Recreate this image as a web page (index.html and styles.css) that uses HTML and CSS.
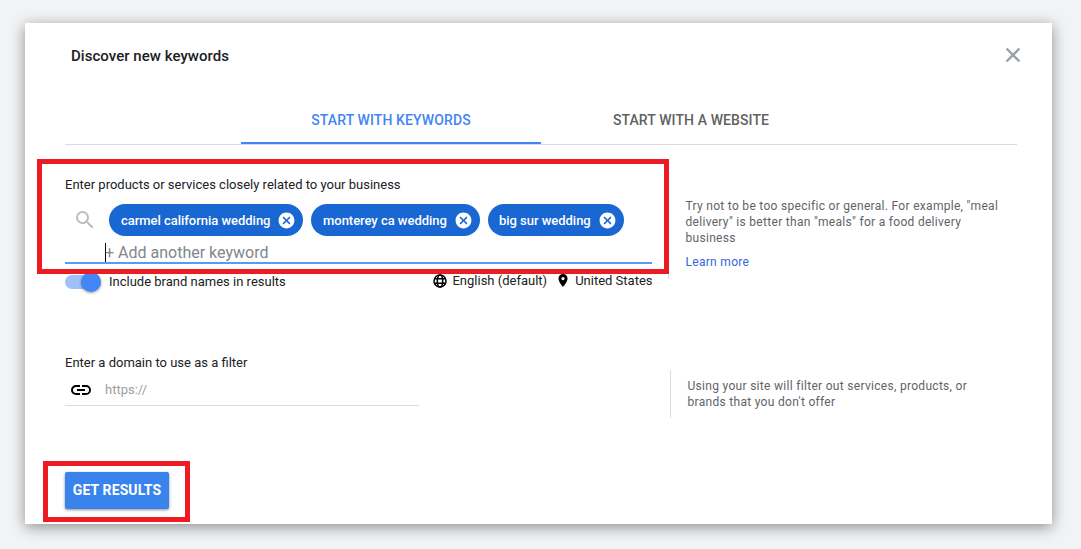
FILE: index.html
```
<!DOCTYPE html>
<html lang="en">
  <head>
    <meta charset="UTF-8" />
    <meta name="viewport" content="width=device-width, initial-scale=1.0" />
    <title>Discover new keywords</title>
    <link rel="stylesheet" href="styles.css">
  </head>
  <body>
    <div class="dialog">
      <div class="header">
        <h1>Discover new keywords</h1>
        <button class="close" aria-label="Close">
          <svg width="16" height="16" viewBox="0 0 16 16">
            <path d="M1.5 1.5l13 13M14.5 1.5l-13 13" stroke="#9aa0a6" stroke-width="2.4" fill="none" />
          </svg>
        </button>
      </div>

      <div class="tabs">
        <div class="tab active">START WITH KEYWORDS</div>
        <div class="tab tab-website">START WITH A WEBSITE</div>
      </div>

      <div class="row keywords-row">
        <div class="keywords">
          <div class="label">Enter products or services closely related to your business</div>
          <div class="chip-input">
            <div class="chips">
              <svg class="search" width="24" height="24" viewBox="0 0 24 24" fill="#bdbdbd">
                <path d="M15.5 14h-.79l-.28-.27A6.47 6.47 0 0 0 16 9.5 6.5 6.5 0 1 0 9.5 16c1.61 0 3.09-.59 4.23-1.57l.27.28v.79l5 4.99L20.49 19l-4.99-5zm-6 0C7.01 14 5 11.99 5 9.5S7.01 5 9.5 5 14 7.01 14 9.5 11.99 14 9.5 14z" />
              </svg>
              <div class="chip chip-carmel">
                <span>carmel california wedding</span>
                <svg width="19" height="19" viewBox="0 0 24 24" fill="#fff">
                  <path d="M12 2C6.47 2 2 6.47 2 12s4.47 10 10 10 10-4.47 10-10S17.53 2 12 2zm5 13.59L15.59 17 12 13.41 8.41 17 7 15.59 10.59 12 7 8.41 8.41 7 12 10.59 15.59 7 17 8.41 13.41 12 17 15.59z" />
                </svg>
              </div>
              <div class="chip chip-monterey">
                <span>monterey ca wedding</span>
                <svg width="19" height="19" viewBox="0 0 24 24" fill="#fff">
                  <path d="M12 2C6.47 2 2 6.47 2 12s4.47 10 10 10 10-4.47 10-10S17.53 2 12 2zm5 13.59L15.59 17 12 13.41 8.41 17 7 15.59 10.59 12 7 8.41 8.41 7 12 10.59 15.59 7 17 8.41 13.41 12 17 15.59z" />
                </svg>
              </div>
              <div class="chip chip-sur">
                <span>big sur wedding</span>
                <svg width="19" height="19" viewBox="0 0 24 24" fill="#fff">
                  <path d="M12 2C6.47 2 2 6.47 2 12s4.47 10 10 10 10-4.47 10-10S17.53 2 12 2zm5 13.59L15.59 17 12 13.41 8.41 17 7 15.59 10.59 12 7 8.41 8.41 7 12 10.59 15.59 7 17 8.41 13.41 12 17 15.59z" />
                </svg>
              </div>
            </div>
            <div class="add">+ Add another keyword</div>
          </div>
          <div class="options">
            <div class="toggle"><div class="knob"></div></div>
            <span class="brand-text">Include brand names in results</span>
            <div class="targeting">
              <svg class="globe" width="14" height="14" viewBox="0 0 14 14" fill="none" stroke="#000" stroke-width="1.5">
                <circle cx="7" cy="7" r="6" />
                <ellipse cx="7" cy="7" rx="2.7" ry="6" />
                <path d="M1.2 4.8h11.6M1.2 9.2h11.6" />
              </svg>
              <span>English (default)</span>
              <svg class="pin" width="10" height="13" viewBox="5 2 14 20" fill="#000">
                <path d="M12 2C8.13 2 5 5.13 5 9c0 5.25 7 13 7 13s7-7.75 7-13c0-3.87-3.13-7-7-7zm0 9.5a2.5 2.5 0 0 1 0-5 2.5 2.5 0 0 1 0 5z" />
              </svg>
              <span>United States</span>
            </div>
          </div>
        </div>
        <div class="hint">
          <p>Try not to be too specific or general. For example, "meal<br>delivery" is better than "meals" for a food delivery<br>business</p>
          <a href="#">Learn more</a>
        </div>
      </div>

      <div class="row domain-row">
        <div class="domain">
          <div class="label">Enter a domain to use as a filter</div>
          <div class="domain-input">
            <svg width="24" height="24" viewBox="0 0 24 24" fill="#000">
              <path d="M3.9 12c0-1.71 1.39-3.1 3.1-3.1h4V7H7a5 5 0 0 0 0 10h4v-1.9H7c-1.71 0-3.1-1.39-3.1-3.1zM8 13h8v-2H8v2zm9-6h-4v1.9h4a3.1 3.1 0 0 1 0 6.2h-4V17h4a5 5 0 0 0 0-10z" />
            </svg>
            <span>https://</span>
          </div>
        </div>
        <div class="site-hint">Using your site will filter out services, products, or<br>brands that you don't offer</div>
      </div>

      <button class="submit">GET RESULTS</button>
    </div>

    <div class="mark mark-keywords"></div>
    <div class="mark mark-submit"></div>
  </body>
</html>
```
FILE: styles.css
```
* {
  box-sizing: border-box;
}
body {
  font-family: Roboto, "Liberation Sans", sans-serif;
  margin: 0;
  padding: 23px 29px 0 25px;
  height: 549px;
  overflow: hidden;
  background-color: #f1f3f4;
  color: #202124;
  font-size: 13px;
}
.dialog {
  height: 501px;
  padding: 0 35px 0 40px;
  background-color: #fff;
  box-shadow: 0 3px 14px rgba(0, 0, 0, 0.42);
}
button {
  border: 0;
  font-family: inherit;
  cursor: pointer;
}
svg {
  display: block;
  flex: none;
}

.header {
  display: flex;
  justify-content: space-between;
  height: 74px;
  padding: 23px 0 0 6px;
}
h1 {
  margin: 0;
  font-size: 15px;
  line-height: 20px;
  font-weight: 500;
  letter-spacing: 0.04px;
}
.close {
  width: 16px;
  height: 16px;
  margin: 1px -4px 0 0;
  padding: 0;
  background: none;
}

.tabs {
  display: flex;
  justify-content: center;
  height: 48px;
  border-bottom: 1px solid #dadce0;
}
.tab {
  width: 300px;
  line-height: 47px;
  text-align: center;
  font-size: 14px;
  font-weight: 500;
  letter-spacing: 0.1px;
  color: #616161;
}
.tab.active {
  color: #4285f4;
  border-bottom: 2px solid #4285f4;
}

.row {
  display: flex;
}
.keywords-row {
  height: 209px;
  padding-top: 31px;
}
.keywords {
  width: 587px;
}
.label {
  line-height: 18px;
}
.chip-input {
  margin-top: 10px;
  border-bottom: 2px solid #5e97f6;
}
.chips {
  display: flex;
  align-items: center;
  gap: 8px;
}
.search {
  margin: 0 5px 0 8px;
}
.chip {
  display: flex;
  align-items: center;
  justify-content: space-between;
  height: 32px;
  padding: 0 7px 0 12px;
  border-radius: 16px;
  background-color: #1967d2;
  color: #fff;
  font-weight: 500;
  letter-spacing: -0.03px;
}
.chip-carmel {
  width: 194px;
  margin-left: -1px;
}
.chip-monterey {
  width: 169px;
}
.chip-sur {
  width: 136px;
  padding-left: 11px;
}
.add {
  height: 19px;
  margin: 7px 0 0 40px;
  border-left: 1px solid #000;
  line-height: 19px;
  font-size: 16px;
  text-indent: -1px;
  color: #80868b;
}
.options {
  display: flex;
  align-items: center;
  height: 35px;
}
.toggle {
  width: 34px;
  height: 14px;
  border-radius: 7px;
  background-color: #a0c0fa;
}
.knob {
  width: 20px;
  height: 20px;
  margin: -3px 0 0 16px;
  border-radius: 50%;
  background-color: #4285f4;
  box-shadow: 0 1px 3px rgba(0, 0, 0, 0.4);
}
.brand-text {
  margin: 0 auto 0 10px;
}
.targeting {
  display: flex;
  align-items: center;
  height: 33px;
  align-self: flex-start;
  margin-right: -0.5px;
}
.globe {
  margin-right: 5px;
}
.pin {
  margin: 0 7px 0 11px;
}

.hint {
  margin-left: 16px;
  height: 103px;
  padding-left: 16.5px;
  border-left: 1px solid #dadce0;
  font-size: 12px;
  line-height: 16px;
  letter-spacing: 0.3px;
  color: #5f6368;
}
.hint p {
  margin: 22px 0 8px;
}
.hint a {
  color: #3367d6;
  text-decoration: none;
}

.domain-row {
  height: 118px;
}
.domain {
  width: 354px;
}
.domain-input {
  display: flex;
  align-items: center;
  gap: 12px;
  height: 34px;
  padding: 2px 0 0 4px;
  border-bottom: 1px solid #dadce0;
  color: #9e9e9e;
}
.site-hint {
  height: 48px;
  margin: 16px 0 0 251px;
  padding: 8px 0 0 16.5px;
  border-left: 1px solid #dadce0;
  font-size: 12px;
  line-height: 16px;
  letter-spacing: 0.3px;
  color: #5f6368;
}

.submit {
  display: block;
  width: 104px;
  height: 37px;
  padding: 0 0 1px;
  border-radius: 2px;
  background-color: #3983ec;
  color: #fff;
  font-size: 14px;
  font-weight: 700;
  letter-spacing: 0.12px;
  box-shadow: 0 1px 3px rgba(0, 0, 0, 0.45);
}

/* red callouts drawn over the dialog */
.mark {
  position: absolute;
  border: 5px solid #ed1c24;
}
.mark-keywords {
  left: 37px;
  top: 159px;
  width: 632px;
  height: 115px;
}
.mark-submit {
  left: 43px;
  top: 461px;
  width: 147px;
  height: 61px;
}
```
